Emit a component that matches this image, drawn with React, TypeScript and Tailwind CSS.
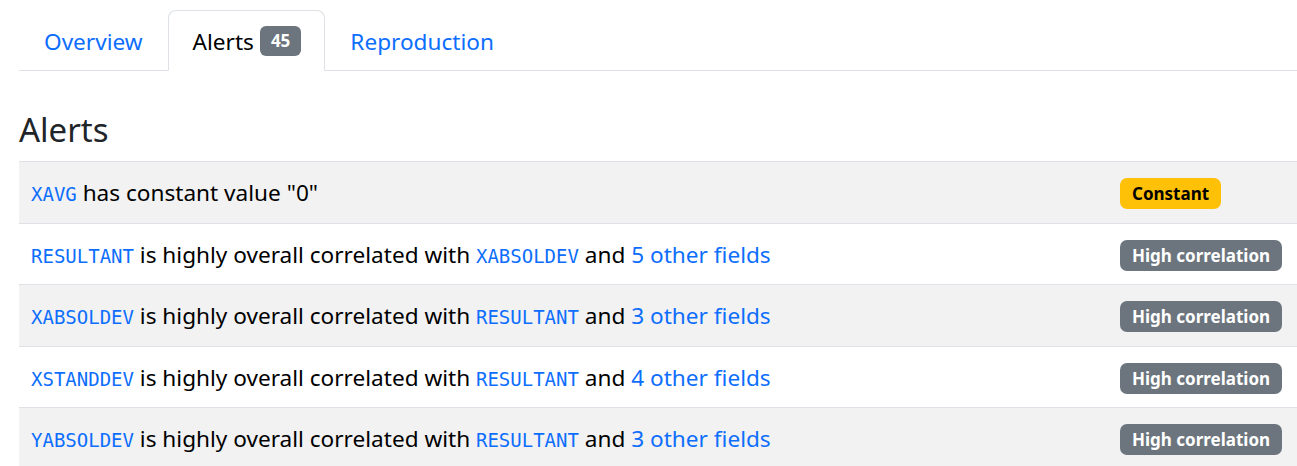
import React from "react";

type Row = {
  name: string;
  text: React.ReactNode;
  badge: "Constant" | "High correlation";
};

const Code = ({ children }: { children: React.ReactNode }) => (
  <code className="font-['DejaVu_Sans_Mono',monospace] text-[19px] text-[#0d6efd]">
    {children}
  </code>
);

const Corr = ({ other, n }: { other: string; n: number }) => (
  <>
    {" "}is highly overall correlated with <Code>{other}</Code> and{" "}
    <a className="text-[#0d6efd]">{n} other fields</a>
  </>
);

const rows: Row[] = [
  { name: "XAVG", text: <> has constant value "0"</>, badge: "Constant" },
  { name: "RESULTANT", text: <Corr other="XABSOLDEV" n={5} />, badge: "High correlation" },
  { name: "XABSOLDEV", text: <Corr other="RESULTANT" n={3} />, badge: "High correlation" },
  { name: "XSTANDDEV", text: <Corr other="RESULTANT" n={4} />, badge: "High correlation" },
  { name: "YABSOLDEV", text: <Corr other="RESULTANT" n={3} />, badge: "High correlation" },
];

export default function App() {
  return (
    <div className="min-h-screen bg-white pl-[19px] font-['Noto_Sans',sans-serif] text-[22.6px] text-[#212529]">
      {/* Tabs */}
      <ul className="flex border-b border-[#dee2e6] pt-[10px]">
        <li className="-mb-px">
          <a className="block border border-transparent px-[24px] pt-[14px] pb-[12px] leading-[33px] text-[#0d6efd]">
            Overview
          </a>
        </li>
        <li className="-mb-px">
          <a className="flex items-center gap-[6px] rounded-t-[8px] border border-[#dee2e6] border-b-white bg-white pl-[24px] pr-[23px] pt-[14px] pb-[12px] leading-[33px] text-black">
            Alerts
            <span className="-mt-[2px] rounded-[6px] bg-[#6c757d] px-[11px] text-[17px] font-bold leading-[30px] text-white">
              45
            </span>
          </a>
        </li>
        <li className="-mb-px">
          <a className="block border border-transparent px-[24px] pt-[14px] pb-[12px] leading-[33px] text-[#0d6efd]">
            Reproduction
          </a>
        </li>
      </ul>

      {/* Heading */}
      <h3 className="mt-[38px] mb-[10px] text-[33px] leading-[42px] font-normal">Alerts</h3>

      {/* Alerts table */}
      <div className="border-t border-[#dee2e6]">
        {rows.map((r, i) => (
          <div
            key={i}
            className={`flex h-[61.5px] items-center border-b border-[#dee2e6] ${
              i % 2 === 0 ? "bg-[#f2f2f2]" : "bg-white"
            }`}
          >
            <div className="flex-1 px-[12px] pt-[3px] leading-[33px] text-black">
              <Code>{r.name}</Code>
              {r.text}
            </div>
            <div className="w-[189px] px-[12px]">
              <span
                className={`inline-block rounded-[7px] px-[12px] text-[17px] font-bold leading-[31px] ${
                  r.badge === "Constant" ? "bg-[#ffc107] text-black" : "bg-[#6c757d] text-white"
                }`}
              >
                {r.badge}
              </span>
            </div>
          </div>
        ))}
      </div>
    </div>
  );
}
